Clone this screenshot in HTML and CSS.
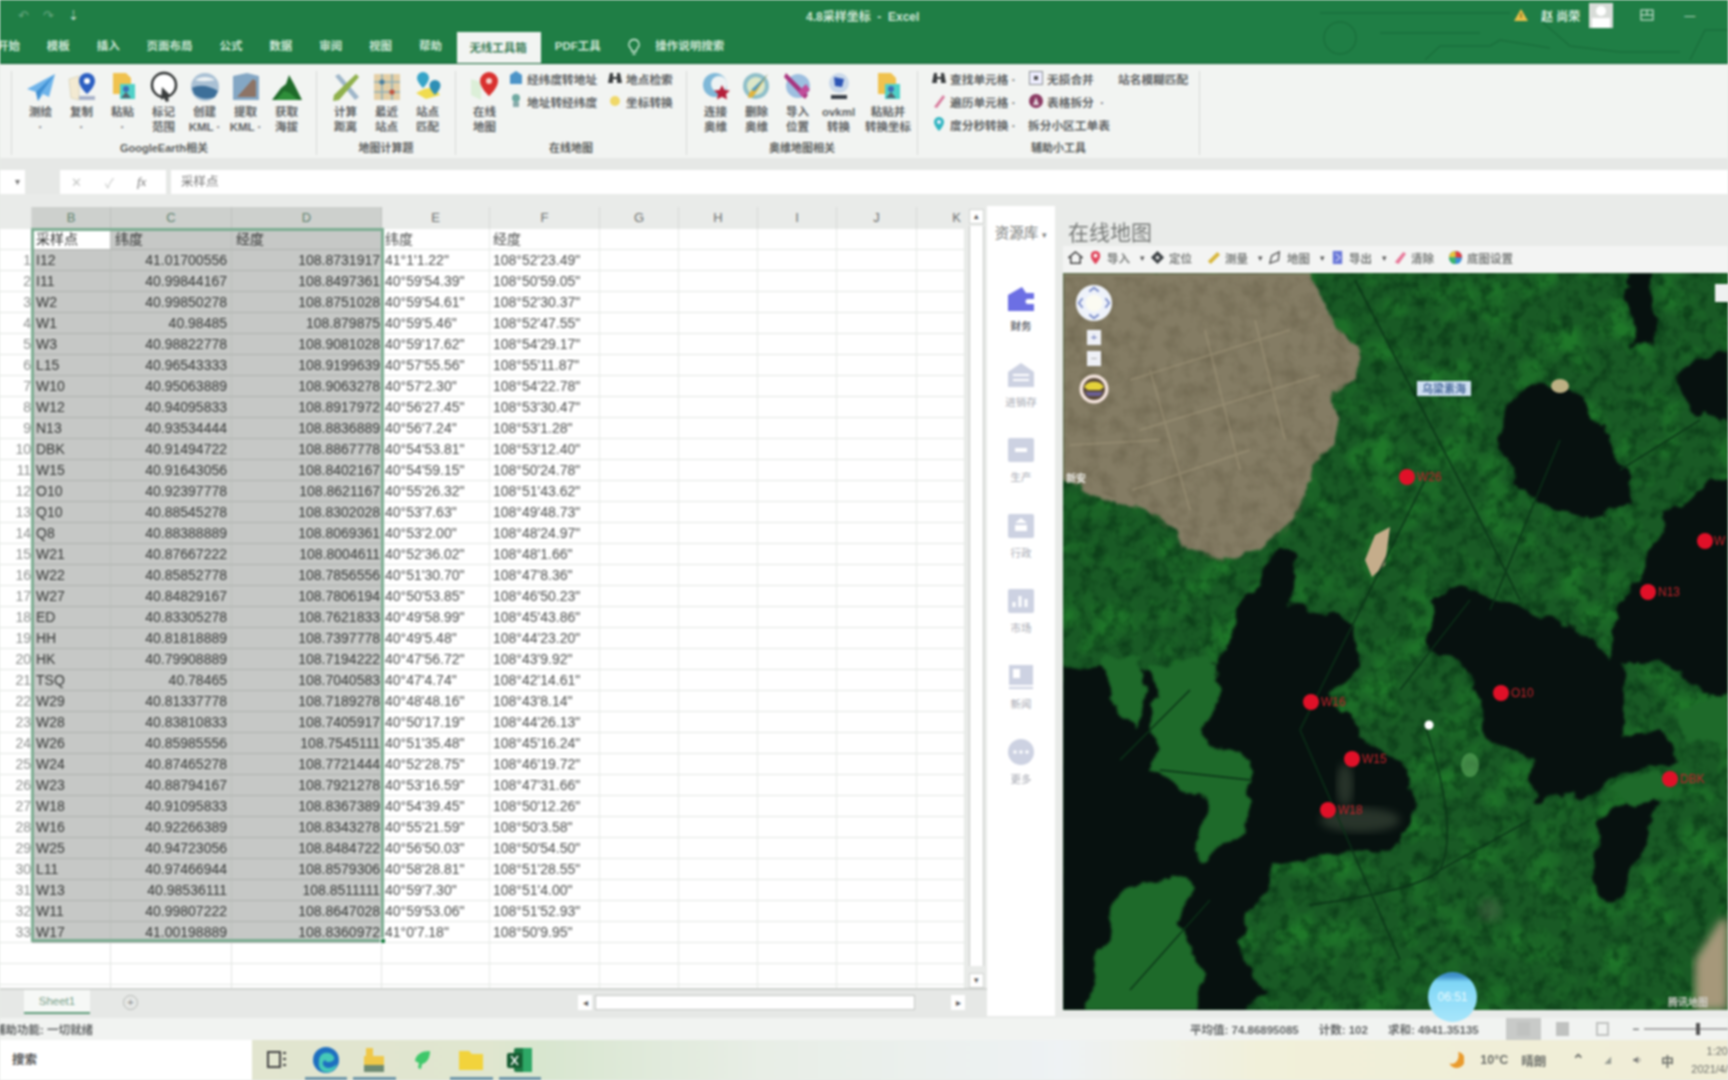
FILE: index.html
```html
<!DOCTYPE html>
<html lang="zh">
<head>
<meta charset="utf-8">
<title>4.8采样坐标 - Excel</title>
<link rel="stylesheet" href="styles.css">
</head>
<body>
<div class="app">
  <header class="titlebar">
    <svg class="circuit" viewBox="0 0 528 64" width="528" height="64"><circle cx="140" cy="38" r="16"/><path d="M180 33h100M225 60l15-14h50l10-6 50 8M340 20l30 26 50 6h60M490 60l15-30h25M120 13h190"/></svg>
    <div class="qat"><span class="qat-undo">↶</span><span class="qat-undo">↷</span><span class="qat-pin">⇣</span></div>
    <div class="doc-title">4.8采样坐标&nbsp; - &nbsp;Excel</div>
    <div class="account">
      <svg class="warn" viewBox="0 0 16 16" width="16" height="16"><path d="M8 2l7 12H1z" fill="#e8c04a"/><path d="M7.5 6h1v5h-1z" fill="#5a4a10"/></svg>
      <span class="user">赵 尚荣</span>
      <div class="avatar"><i></i><b></b></div>
      <svg class="win-ico" viewBox="0 0 14 12" width="14" height="12"><rect x="1" y="1" width="12" height="10" fill="none" stroke="#e6f2ea"/><path d="M7 1v5M1 6h12" stroke="#e6f2ea"/></svg>
      <span class="minimize">—</span>
    </div>
  </header>

  <nav class="tabs">
    <span class="tab">开始</span><span class="tab">模板</span><span class="tab">插入</span><span class="tab">页面布局</span><span class="tab">公式</span><span class="tab">数据</span><span class="tab">审阅</span><span class="tab">视图</span><span class="tab">帮助</span>
    <span class="tab active">无线工具箱</span><span class="tab">PDF工具</span>
    <svg class="bulb" viewBox="0 0 14 18" width="14" height="18"><path d="M7 1.500a5 5 0 0 0-3 9l1 3h4l1-3a5 5 0 0 0-3-9zM5.500 16h3" fill="none" stroke="#d8f0df" stroke-width="1.300"/></svg>
    <span class="tab tell">操作说明搜索</span>
  </nav>

  <section class="ribbon">
    <div class="group g0"></div>
    <div class="group g1">
      <div class="items">
        <div class="big"><svg class="ico" viewBox="0 0 32 32"><path d="M30 3L2 18l9 3 2 9 5-7 6 3z" fill="#6fb4ea"/><path d="M30 3L11 21l2 9 3-8z" fill="#3f8fd2"/></svg><span>测绘<br>·</span></div>
        <div class="big"><svg class="ico" viewBox="0 0 32 32"><path d="M3 8l10-3v24l-8-2z" fill="#f3ead2" stroke="#cfc7a8" stroke-width=".6"/><path d="M21 2a8 8 0 0 1 8 8c0 6-8 13-8 13s-8-7-8-13a8 8 0 0 1 8-8z" fill="#2c5fc2"/><circle cx="21" cy="10" r="3" fill="#fff"/><rect x="13" y="25" width="16" height="4" fill="#a9b3c9"/></svg><span>复制<br>·</span></div>
        <div class="big"><svg class="ico" viewBox="0 0 32 32"><path d="M6 2h13l5 5v16H6z" fill="#f0c24e"/><rect x="13" y="13" width="15" height="15" fill="#4fd1c8"/><circle cx="19" cy="18" r="3" fill="#3f6fb5"/><path d="M14 27l5-6 5 6z" fill="#55606e"/></svg><span>粘贴<br>·</span></div>
        <div class="big"><svg class="ico" viewBox="0 0 32 32"><circle cx="16" cy="14" r="12" fill="#fff" stroke="#2c2f2f" stroke-width="2.400"/><path d="M14 16l9 9-3 1 1 4-3 1-2-4-3 2z" fill="#3a3d3d"/></svg><span>标记<br>范围</span></div>
        <div class="big"><svg class="ico" viewBox="0 0 32 32"><circle cx="16" cy="16" r="14" fill="#a9c0d4"/><path d="M3 17c8-4 18-2 26 3l-3 6c-7 3-16 2-21-3z" fill="#3d6f99"/><path d="M6 9c6-4 14-4 20 0-6 1-13 2-20 0z" fill="#eef2f4"/></svg><span>创建<br>KML ·</span></div>
        <div class="big"><svg class="ico" viewBox="0 0 32 32"><path d="M3 5l14-3 12 3v24H3z" fill="#84a7c4"/><path d="M7 26l16-18 3 2v16z" fill="#8d7466"/></svg><span>提取<br>KML ·</span></div>
        <div class="big"><svg class="ico" viewBox="0 0 32 32"><path d="M1 29l9-12 5-4 3-9 5 9 8 16z" fill="#1f6b2a"/><path d="M5 29l8-9 6 2 8 7z" fill="#2f8f3a"/></svg><span>获取<br>海拔</span></div>
      </div>
      <div class="gtitle">GoogleEarth相关</div>
    </div>
    <div class="group g2">
      <div class="items">
        <div class="big"><svg class="ico" viewBox="0 0 32 32"><path d="M5 5l4-2 20 23-4 3z" fill="#9fb6c9"/><path d="M26 3l3 3L9 29l-6 1 1-6z" fill="#8fb04c"/></svg><span>计算<br>距离</span></div>
        <div class="big"><svg class="ico" viewBox="0 0 32 32"><rect x="3" y="3" width="26" height="26" fill="#e4cfa6"/><path d="M3 11h26M3 21h26M11 3v26M21 3v26" stroke="#8fb0b8" stroke-width="1.600"/><circle cx="11" cy="11" r="2.600" fill="#4a7f9e"/><circle cx="21" cy="21" r="2.600" fill="#c0533f"/></svg><span>最近<br>站点</span></div>
        <div class="big"><svg class="ico" viewBox="0 0 32 32"><path d="M4 22l10 6 14-4-6-8-10 2z" fill="#f0dc4e"/><path d="M11 1a6 6 0 0 1 6 6c0 4-6 10-6 10S5 11 5 7a6 6 0 0 1 6-6z" fill="#35a4c8"/><path d="M23 9a5.500 5.500 0 0 1 5.500 5.500c0 4-5.500 9.500-5.500 9.500s-5.500-5.500-5.500-9.500A5.500 5.500 0 0 1 23 9z" fill="#2f8fb5"/></svg><span>站点<br>匹配</span></div>
      </div>
      <div class="gtitle">地图计算题</div>
    </div>
    <div class="group g3">
      <div class="items">
        <div class="big"><svg class="ico" viewBox="0 0 32 32"><path d="M2 8l10 3v18L2 24z" fill="#dcefd8"/><path d="M20 1a9 9 0 0 1 9 9c0 7-9 15-9 15s-9-8-9-15a9 9 0 0 1 9-9z" fill="#d9312f"/><circle cx="20" cy="10" r="3" fill="#f6d0c8"/></svg><span>在线<br>地图</span></div>
        <div class="smallcol c31">
          <div class="sm"><svg class="mini" viewBox="0 0 16 16"><path d="M8 1l6 4v9H2V5z" fill="#4d94c8"/></svg><span>经纬度转地址</span></div>
          <div class="sm"><svg class="mini" viewBox="0 0 16 16"><circle cx="8" cy="5" r="4" fill="#6fa8a0"/><rect x="5" y="9" width="6" height="5" fill="#8aa"/></svg><span>地址转经纬度</span></div>
        </div>
        <div class="smallcol c32">
          <div class="sm"><svg class="mini" viewBox="0 0 16 16"><path d="M1 13l2-10h3v4h4V3h3l2 10h-5V9H6v4z" fill="#3a3d3f"/></svg><span>地点检索</span></div>
          <div class="sm"><svg class="mini" viewBox="0 0 16 16"><circle cx="8" cy="8" r="5" fill="#f0d868"/></svg><span>坐标转换</span></div>
        </div>
      </div>
      <div class="gtitle">在线地图</div>
    </div>
    <div class="group g4">
      <div class="items">
        <div class="big"><svg class="ico" viewBox="0 0 32 32"><circle cx="15" cy="14" r="12" fill="#7fb8d8"/><circle cx="19" cy="13" r="8" fill="#eef3f4"/><path d="M22 14l2.500 5 5.500.5-4 3.500 1 5.500-5-2.800-5 2.800 1-5.500-4-3.500 5.500-.5z" fill="#b5203a"/></svg><span>连接<br>奥维</span></div>
        <div class="big"><svg class="ico" viewBox="0 0 32 32"><circle cx="15" cy="15" r="13" fill="#8fbfc9"/><circle cx="15" cy="15" r="9" fill="#dce7c8"/><path d="M27 3L12 26l-5 1 1-5z" fill="#e0b43c"/><path d="M27 3L14 20l-4-1z" fill="#4f9ac2"/></svg><span>删除<br>奥维</span></div>
        <div class="big"><svg class="ico" viewBox="0 0 32 32"><circle cx="16" cy="15" r="12" fill="#9dbfe0"/><path d="M4 2l22 22-3 4L2 6z" fill="#a8337e"/><path d="M24 13l4 6-8 7-4-5z" fill="#c14d9a"/></svg><span>导入<br>位置</span></div>
        <div class="big"><svg class="ico" viewBox="0 0 32 32"><circle cx="16" cy="12" r="10" fill="#c9d8ea"/><path d="M11 6l10 2-2 8-7-1z" fill="#2d55b5"/><rect x="8" y="24" width="16" height="4" fill="#3a4048"/></svg><span>ovkml<br>转换</span></div>
        <div class="big wide"><svg class="ico" viewBox="0 0 32 32"><path d="M6 2h13l5 5v16H6z" fill="#f0c24e"/><rect x="13" y="13" width="15" height="15" fill="#4fd1c8"/><circle cx="19" cy="18" r="3" fill="#3f6fb5"/><path d="M14 27l5-6 5 6z" fill="#55606e"/></svg><span>粘贴并<br>转换坐标</span></div>
      </div>
      <div class="gtitle">奥维地图相关</div>
    </div>
    <div class="group g5">
      <div class="items">
        <div class="smallcol c51">
          <div class="sm"><svg class="mini" viewBox="0 0 16 16"><path d="M1 13l2-10h3v4h4V3h3l2 10h-5V9H6v4z" fill="#3a3d3f"/></svg><span>查找单元格 ·</span></div>
          <div class="sm"><svg class="mini" viewBox="0 0 16 16"><path d="M3 14L12 2l2 2-8 11z" fill="#d87a9c"/></svg><span>遍历单元格 ·</span></div>
          <div class="sm"><svg class="mini" viewBox="0 0 16 16"><path d="M8 1a5 5 0 0 1 5 5c0 4-5 9-5 9S3 10 3 6a5 5 0 0 1 5-5z" fill="#2fb5c0"/><circle cx="8" cy="6" r="2" fill="#eef"/></svg><span>度分秒转换 ·</span></div>
        </div>
        <div class="smallcol c52">
          <div class="sm"><svg class="mini" viewBox="0 0 16 16"><rect x="1.500" y="1.500" width="13" height="13" fill="#eef" stroke="#8a8f92"/><rect x="6" y="6" width="4" height="4" fill="#555"/></svg><span>无损合并</span></div>
          <div class="sm"><svg class="mini" viewBox="0 0 16 16"><circle cx="8" cy="8" r="7" fill="#8a3a62"/><path d="M5 12l3-8 3 8z" fill="#e3d5dc"/></svg><span>表格拆分 &nbsp;·</span></div>
          <div class="sm plain"><span>拆分小区工单表</span></div>
        </div>
        <div class="smallcol c53">
          <div class="sm plain"><span>站名模糊匹配</span></div>
        </div>
      </div>
      <div class="gtitle">辅助小工具</div>
    </div>
  </section>

  <div class="ribbon-gap"></div>

  <div class="formula">
    <div class="namebox"><span>▾</span></div>
    <div class="fx-ctl"><span>✕</span><span>✓</span><em>fx</em></div>
    <div class="fx-input">采样点</div>
  </div>

  <main class="workspace">
    <section class="sheet">
      <div class="grid-wrap">
        <div class="grid">
          <div class="col-head">
            <span></span><span class="sel">B</span><span class="sel">C</span><span class="sel">D</span><span>E</span><span>F</span><span>G</span><span>H</span><span>I</span><span>J</span><span>K</span>
          </div>
          <div class="rows">
            <div class="row"><i></i><b class="active-cell">采样点</b><b>纬度</b><b>经度</b><u>纬度</u><u>经度</u><s></s><s></s><s></s><s></s><s></s></div>
            <div class="row"><i>1</i><b>I12</b><b class="n">41.01700556</b><b class="n">108.8731917</b><u>41°1'1.22"</u><u>108°52'23.49"</u><s></s><s></s><s></s><s></s><s></s></div>
            <div class="row"><i>2</i><b>I11</b><b class="n">40.99844167</b><b class="n">108.8497361</b><u>40°59'54.39"</u><u>108°50'59.05"</u><s></s><s></s><s></s><s></s><s></s></div>
            <div class="row"><i>3</i><b>W2</b><b class="n">40.99850278</b><b class="n">108.8751028</b><u>40°59'54.61"</u><u>108°52'30.37"</u><s></s><s></s><s></s><s></s><s></s></div>
            <div class="row"><i>4</i><b>W1</b><b class="n">40.98485</b><b class="n">108.879875</b><u>40°59'5.46"</u><u>108°52'47.55"</u><s></s><s></s><s></s><s></s><s></s></div>
            <div class="row"><i>5</i><b>W3</b><b class="n">40.98822778</b><b class="n">108.9081028</b><u>40°59'17.62"</u><u>108°54'29.17"</u><s></s><s></s><s></s><s></s><s></s></div>
            <div class="row"><i>6</i><b>L15</b><b class="n">40.96543333</b><b class="n">108.9199639</b><u>40°57'55.56"</u><u>108°55'11.87"</u><s></s><s></s><s></s><s></s><s></s></div>
            <div class="row"><i>7</i><b>W10</b><b class="n">40.95063889</b><b class="n">108.9063278</b><u>40°57'2.30"</u><u>108°54'22.78"</u><s></s><s></s><s></s><s></s><s></s></div>
            <div class="row"><i>8</i><b>W12</b><b class="n">40.94095833</b><b class="n">108.8917972</b><u>40°56'27.45"</u><u>108°53'30.47"</u><s></s><s></s><s></s><s></s><s></s></div>
            <div class="row"><i>9</i><b>N13</b><b class="n">40.93534444</b><b class="n">108.8836889</b><u>40°56'7.24"</u><u>108°53'1.28"</u><s></s><s></s><s></s><s></s><s></s></div>
            <div class="row"><i>10</i><b>DBK</b><b class="n">40.91494722</b><b class="n">108.8867778</b><u>40°54'53.81"</u><u>108°53'12.40"</u><s></s><s></s><s></s><s></s><s></s></div>
            <div class="row"><i>11</i><b>W15</b><b class="n">40.91643056</b><b class="n">108.8402167</b><u>40°54'59.15"</u><u>108°50'24.78"</u><s></s><s></s><s></s><s></s><s></s></div>
            <div class="row"><i>12</i><b>O10</b><b class="n">40.92397778</b><b class="n">108.8621167</b><u>40°55'26.32"</u><u>108°51'43.62"</u><s></s><s></s><s></s><s></s><s></s></div>
            <div class="row"><i>13</i><b>Q10</b><b class="n">40.88545278</b><b class="n">108.8302028</b><u>40°53'7.63"</u><u>108°49'48.73"</u><s></s><s></s><s></s><s></s><s></s></div>
            <div class="row"><i>14</i><b>Q8</b><b class="n">40.88388889</b><b class="n">108.8069361</b><u>40°53'2.00"</u><u>108°48'24.97"</u><s></s><s></s><s></s><s></s><s></s></div>
            <div class="row"><i>15</i><b>W21</b><b class="n">40.87667222</b><b class="n">108.8004611</b><u>40°52'36.02"</u><u>108°48'1.66"</u><s></s><s></s><s></s><s></s><s></s></div>
            <div class="row"><i>16</i><b>W22</b><b class="n">40.85852778</b><b class="n">108.7856556</b><u>40°51'30.70"</u><u>108°47'8.36"</u><s></s><s></s><s></s><s></s><s></s></div>
            <div class="row"><i>17</i><b>W27</b><b class="n">40.84829167</b><b class="n">108.7806194</b><u>40°50'53.85"</u><u>108°46'50.23"</u><s></s><s></s><s></s><s></s><s></s></div>
            <div class="row"><i>18</i><b>ED</b><b class="n">40.83305278</b><b class="n">108.7621833</b><u>40°49'58.99"</u><u>108°45'43.86"</u><s></s><s></s><s></s><s></s><s></s></div>
            <div class="row"><i>19</i><b>HH</b><b class="n">40.81818889</b><b class="n">108.7397778</b><u>40°49'5.48"</u><u>108°44'23.20"</u><s></s><s></s><s></s><s></s><s></s></div>
            <div class="row"><i>20</i><b>HK</b><b class="n">40.79908889</b><b class="n">108.7194222</b><u>40°47'56.72"</u><u>108°43'9.92"</u><s></s><s></s><s></s><s></s><s></s></div>
            <div class="row"><i>21</i><b>TSQ</b><b class="n">40.78465</b><b class="n">108.7040583</b><u>40°47'4.74"</u><u>108°42'14.61"</u><s></s><s></s><s></s><s></s><s></s></div>
            <div class="row"><i>22</i><b>W29</b><b class="n">40.81337778</b><b class="n">108.7189278</b><u>40°48'48.16"</u><u>108°43'8.14"</u><s></s><s></s><s></s><s></s><s></s></div>
            <div class="row"><i>23</i><b>W28</b><b class="n">40.83810833</b><b class="n">108.7405917</b><u>40°50'17.19"</u><u>108°44'26.13"</u><s></s><s></s><s></s><s></s><s></s></div>
            <div class="row"><i>24</i><b>W26</b><b class="n">40.85985556</b><b class="n">108.7545111</b><u>40°51'35.48"</u><u>108°45'16.24"</u><s></s><s></s><s></s><s></s><s></s></div>
            <div class="row"><i>25</i><b>W24</b><b class="n">40.87465278</b><b class="n">108.7721444</b><u>40°52'28.75"</u><u>108°46'19.72"</u><s></s><s></s><s></s><s></s><s></s></div>
            <div class="row"><i>26</i><b>W23</b><b class="n">40.88794167</b><b class="n">108.7921278</b><u>40°53'16.59"</u><u>108°47'31.66"</u><s></s><s></s><s></s><s></s><s></s></div>
            <div class="row"><i>27</i><b>W18</b><b class="n">40.91095833</b><b class="n">108.8367389</b><u>40°54'39.45"</u><u>108°50'12.26"</u><s></s><s></s><s></s><s></s><s></s></div>
            <div class="row"><i>28</i><b>W16</b><b class="n">40.92266389</b><b class="n">108.8343278</b><u>40°55'21.59"</u><u>108°50'3.58"</u><s></s><s></s><s></s><s></s><s></s></div>
            <div class="row"><i>29</i><b>W25</b><b class="n">40.94723056</b><b class="n">108.8484722</b><u>40°56'50.03"</u><u>108°50'54.50"</u><s></s><s></s><s></s><s></s><s></s></div>
            <div class="row"><i>30</i><b>L11</b><b class="n">40.97466944</b><b class="n">108.8579306</b><u>40°58'28.81"</u><u>108°51'28.55"</u><s></s><s></s><s></s><s></s><s></s></div>
            <div class="row"><i>31</i><b>W13</b><b class="n">40.98536111</b><b class="n">108.8511111</b><u>40°59'7.30"</u><u>108°51'4.00"</u><s></s><s></s><s></s><s></s><s></s></div>
            <div class="row"><i>32</i><b>W11</b><b class="n">40.99807222</b><b class="n">108.8647028</b><u>40°59'53.06"</u><u>108°51'52.93"</u><s></s><s></s><s></s><s></s><s></s></div>
            <div class="row"><i>33</i><b>W17</b><b class="n">41.00198889</b><b class="n">108.8360972</b><u>41°0'7.18"</u><u>108°50'9.95"</u><s></s><s></s><s></s><s></s><s></s></div>
            <div class="row blank"><i></i><em></em><em></em><em></em><s></s><s></s><s></s><s></s><s></s><s></s><s></s></div>
            <div class="row blank"><i></i><em></em><em></em><em></em><s></s><s></s><s></s><s></s><s></s><s></s><s></s></div>
            <div class="row blank"><i></i><em></em><em></em><em></em><s></s><s></s><s></s><s></s><s></s><s></s><s></s></div>
            <div class="selection"><span class="handle"></span></div>
          </div>
        </div>
        <div class="vscroll"><span class="arrow">▴</span><div class="track"></div><span class="arrow">▾</span></div>
      </div>
      <div class="sheet-tabs">
        <div class="sheet-tab">Sheet1</div>
        <span class="add-sheet">+</span>
        <div class="hscroll"><span class="arrow">◂</span><div class="htrack"></div><span class="arrow">▸</span></div>
      </div>
    </section>

    <aside class="sidebar">
      <div class="side-head">资源库 <small>▾</small></div>
      <div class="side-item current"><svg viewBox="0 0 30 28" width="30" height="28"><path d="M2 10l14-8 4 6h8v6h-6a2 2 0 0 0 0 5h6v7H2z" fill="#6c6fe4"/></svg><span>财务</span></div>
      <div class="side-item"><svg viewBox="0 0 30 28" width="30" height="28"><path d="M2 11L15 2l13 9v15H2z" fill="#cdd2e2"/><path d="M7 14h16M7 19h16" stroke="#fff" stroke-width="2"/></svg><span>进销存</span></div>
      <div class="side-item"><svg viewBox="0 0 30 28" width="30" height="28"><rect x="2" y="2" width="26" height="24" rx="2" fill="#cdd2e2"/><path d="M9 14h12" stroke="#fff" stroke-width="4"/></svg><span>生产</span></div>
      <div class="side-item"><svg viewBox="0 0 30 28" width="30" height="28"><rect x="2" y="2" width="26" height="24" rx="2" fill="#cdd2e2"/><path d="M15 6l6 5H9zM9 13h12v6H9z" fill="#fff"/></svg><span>行政</span></div>
      <div class="side-item"><svg viewBox="0 0 30 28" width="30" height="28"><rect x="2" y="2" width="26" height="24" rx="2" fill="#cdd2e2"/><path d="M8 20v-5M14 20V9M20 20v-8" stroke="#fff" stroke-width="3"/></svg><span>市场</span></div>
      <div class="side-item"><svg viewBox="0 0 30 28" width="30" height="28"><path d="M3 2h24v20H3z" fill="#cdd2e2"/><rect x="7" y="6" width="7" height="9" fill="#fff"/><path d="M3 25h24" stroke="#cdd2e2" stroke-width="2"/></svg><span>新闻</span></div>
      <div class="side-item"><svg viewBox="0 0 30 28" width="30" height="28"><circle cx="15" cy="14" r="13" fill="#cdd2e2"/><circle cx="9" cy="14" r="1.800" fill="#fff"/><circle cx="15" cy="14" r="1.800" fill="#fff"/><circle cx="21" cy="14" r="1.800" fill="#fff"/></svg><span>更多</span></div>
    </aside>

    <section class="map-panel">
      <h1 class="map-title">在线地图</h1>
      <div class="map-tools">
        <svg class="tool-ico" viewBox="0 0 16 16"><path d="M8 2L1 8h2v6h10V8h2z" fill="none" stroke="#444" stroke-width="1.600"/></svg>
        <svg class="tool-ico" viewBox="0 0 16 16"><path d="M8 1a5 5 0 0 1 5 5c0 4-5 9-5 9S3 10 3 6a5 5 0 0 1 5-5z" fill="#e0445a"/><circle cx="8" cy="6" r="2" fill="#fff"/></svg>
        <span class="tool-text">导入</span><span class="caret">▾</span>
        <svg class="tool-ico" viewBox="0 0 16 16"><path d="M8 1l7 7-7 7-7-7z" fill="#3a3f42"/><circle cx="8" cy="8" r="2" fill="#ddd"/></svg>
        <span class="tool-text">定位</span>
        <svg class="tool-ico gap" viewBox="0 0 16 16"><path d="M2 12L12 2l3 3L5 15z" fill="#d8b73c"/></svg>
        <span class="tool-text">测量</span><span class="caret">▾</span>
        <svg class="tool-ico" viewBox="0 0 16 16"><path d="M2 14l2-8 8-4-1 9z" fill="none" stroke="#555" stroke-width="1.500"/></svg>
        <span class="tool-text">地图</span><span class="caret">▾</span>
        <svg class="tool-ico" viewBox="0 0 16 16"><rect x="3" y="1" width="10" height="14" fill="#6a78d8"/><path d="M6 4l5 4-5 4" stroke="#fff" fill="none"/></svg>
        <span class="tool-text">导出</span><span class="caret">▾</span>
        <svg class="tool-ico" viewBox="0 0 16 16"><path d="M3 13L12 2l3 2-8 11z" fill="#e8799a"/></svg>
        <span class="tool-text">清除</span>
        <svg class="tool-ico gap" viewBox="0 0 16 16"><circle cx="8" cy="8" r="7" fill="#3a8fd8"/><path d="M8 8V1a7 7 0 0 1 7 7z" fill="#e23b3b"/><path d="M8 8H1a7 7 0 0 1 7-7z" fill="#e8c53a"/><path d="M8 8v7a7 7 0 0 1-7-7z" fill="#3bb56a"/></svg>
        <span class="tool-text">底图设置</span>
      </div>
      <div class="map">
        <svg class="map-svg" viewBox="1063 273 665 737" width="665" height="737">
          <defs>
            <filter id="rough" filterUnits="userSpaceOnUse" x="1063" y="273" width="665" height="737" color-interpolation-filters="sRGB"><feTurbulence type="fractalNoise" baseFrequency=".035" numOctaves="4" seed="5" result="n"/><feDisplacementMap in="SourceGraphic" in2="n" scale="22" xChannelSelector="R" yChannelSelector="G"/><feGaussianBlur stdDeviation="1.200"/></filter>
            <filter id="veg" filterUnits="userSpaceOnUse" x="1063" y="273" width="665" height="737" color-interpolation-filters="sRGB"><feTurbulence type="fractalNoise" baseFrequency=".075" numOctaves="4" seed="9"/><feColorMatrix values="0 0 0 0 .03  0 0 0 0 .2  0 0 0 0 .08  2.600 0 0 0 -1.150"/></filter>
            <filter id="bright" filterUnits="userSpaceOnUse" x="1063" y="273" width="665" height="737" color-interpolation-filters="sRGB"><feTurbulence type="fractalNoise" baseFrequency=".025" numOctaves="3" seed="21"/><feColorMatrix values="0 0 0 0 .13  0 0 0 0 .5  0 0 0 0 .17  3 0 0 0 -1.400"/></filter>
            <filter id="soil" filterUnits="userSpaceOnUse" x="1063" y="273" width="665" height="737" color-interpolation-filters="sRGB"><feTurbulence type="fractalNoise" baseFrequency=".06" numOctaves="3" seed="3"/><feColorMatrix values="0 0 0 0 .4  0 0 0 0 .37  0 0 0 0 .28  2 0 0 0 -.85"/></filter>
            <filter id="soft"><feGaussianBlur stdDeviation="4"/></filter>
            <clipPath id="tan-clip"><path d="M1064 277H1311L1320 303 1358 350 1354 380 1333 397 1333 443 1311 470 1303 510 1286 533 1222 563 1188 550 1145 510 1086 487 1064 477Z"/></clipPath>
          </defs>
          <rect class="m-green" x="1063" y="273" width="665" height="737"/>
          <rect x="1063" y="273" width="665" height="737" filter="url(#bright)" opacity=".8"/>
          <rect x="1063" y="273" width="665" height="737" filter="url(#veg)" opacity=".7"/>
          <g class="m-water" filter="url(#rough)">
            <path d="M1056 664L1130 672 1215 668 1248 597 1281 547 1299 553 1290 603 1354 623 1358 670 1333 693 1358 737 1405 767 1414 817 1401 847 1333 853 1273 867 1239 937 1260 993 1240 1020H1050Z"/>
            <path d="M1507 403L1541 383 1580 393 1601 427 1614 457 1639 503 1597 517 1554 510 1512 483 1503 437Z"/>
            <path d="M1627 268L1652 268 1654 345 1632 350Z"/>
            <path d="M1678 372L1735 338V420L1690 412Z"/>
            <path d="M1430 603L1465 583 1499 603 1550 617 1592 637 1612 660 1620 603 1650 555 1668 510 1735 470V700L1700 690 1660 660 1622 660 1622 735 1668 735 1680 760 1605 780 1592 793 1537 803 1530 760 1490 740 1478 700 1462 665 1432 650Z"/>
            <path d="M1597 827L1630 800 1660 800 1642 860 1612 905 1590 880Z"/>
          </g>
          <g class="m-green-2" filter="url(#rough)">
            <path d="M1098 660L1141 655 1145 703 1137 733 1115 710Z"/>
            <path d="M1149 667L1209 655 1218 680 1205 737 1239 757 1256 777 1243 827 1205 863 1192 850 1209 803 1188 790 1149 770 1158 727Z"/>
            <path d="M1111 903L1145 880 1188 877 1196 887 1175 927 1209 973 1188 1020 1080 1020 1107 943Z"/>
            <path d="M1668 715L1728 690 1735 740 1690 745Z"/>
            <path d="M1600 790L1660 770 1670 790 1640 810Z"/>
          </g>
          <g class="m-tan" filter="url(#rough)">
            <path d="M1056 268H1311L1320 303 1358 350 1354 380 1333 397 1333 443 1311 470 1303 510 1286 533 1222 563 1188 550 1145 510 1086 487 1056 477Z"/>
          </g>
          <rect x="1063" y="273" width="300" height="300" clip-path="url(#tan-clip)" filter="url(#soil)" opacity=".6"/>
          <g class="m-fields">
            <path d="M1130 380L1290 330M1140 430L1320 375M1132 490L1250 450M1205 330L1240 470M1150 370L1190 510M1255 320L1285 440M1070 445L1160 440"/>
          </g>
          <g class="m-bare">
            <path class="m-sand" d="M1375 535L1390 527 1385 565 1372 577 1365 560Z"/>
            <ellipse class="m-sand2" cx="1560" cy="386" rx="9" ry="7"/>
            <ellipse class="m-grey" cx="1490" cy="910" rx="11" ry="12"/>
            <ellipse class="m-grey" cx="1360" cy="820" rx="40" ry="12"/>
            <ellipse class="m-grey" cx="1345" cy="785" rx="8" ry="22"/>
            <ellipse class="m-pale" cx="1470" cy="765" rx="9" ry="12"/>
            <path class="m-sand-edge" d="M1695 1010V960L1720 920 1728 918V1010Z"/>
          </g>
          <g class="m-road">
            <path d="M1355 280L1480 520 1520 600M1430 470L1300 730M1560 440L1490 610M1190 690L1120 760M1160 770L1250 780M1425 725Q1460 830 1440 870 1420 890 1310 905M1440 870L1530 820M1700 420L1620 470M1300 730L1400 960M1470 600L1400 690M1130 990L1210 900"/>
          </g>
          <g class="m-pins">
            <circle cx="1407" cy="477" r="8"/><text x="1417" y="481">W26</text>
            <circle cx="1705" cy="541" r="8"/><text x="1714" y="545">W</text>
            <circle cx="1648" cy="592" r="8"/><text x="1658" y="596">N13</text>
            <circle cx="1501" cy="693" r="8"/><text x="1511" y="697">O10</text>
            <circle cx="1311" cy="702" r="8"/><text x="1321" y="706">W16</text>
            <circle cx="1352" cy="759" r="8"/><text x="1362" y="763">W15</text>
            <circle cx="1328" cy="810" r="8"/><text x="1338" y="814">W18</text>
            <circle cx="1670" cy="779" r="8"/><text x="1680" y="783">DBK</text>
          </g>
          <circle class="m-dot" cx="1429" cy="725" r="4.500"/>
          <rect class="m-label" x="1417" y="381" width="54" height="15"/>
          <text class="m-label-t" x="1444" y="393">乌梁素海</text>
          <text class="m-side-t" x="1066" y="482">新安</text>
          <text class="m-brand" x="1668" y="1006">腾讯地图</text>
          <rect class="m-chip" x="1715" y="284" width="15" height="18"/>
        </svg>
        <div class="map-ctl">
          <svg class="nav" viewBox="0 0 40 40" width="38" height="38"><circle cx="20" cy="20" r="19" fill="#eef2fa"/><circle cx="20" cy="20" r="9" fill="#fbfbf2"/><path d="M15 8l5-4 5 4M15 32l5 4 5-4M8 15l-4 5 4 5M32 15l4 5-4 5" fill="none" stroke="#7a8cc8" stroke-width="2"/></svg>
          <span class="zoom-btn">+</span>
          <span class="zoom-btn">−</span>
          <svg class="layer" viewBox="0 0 30 30" width="30" height="30"><circle cx="15" cy="15" r="14.500" fill="#f3e3dc"/><circle cx="15" cy="15" r="11" fill="#5a4a3a"/><path d="M5 13a11 9 0 0 1 20 0l-4 3H9z" fill="#e4d23a"/><path d="M6 18h18l-3 4H9z" fill="#6a5f96"/></svg>
        </div>
      </div>
    </section>

    <div class="timer">06:51</div>
  </main>

  <footer class="status">
    <div class="status-left">辅助功能: 一切就绪</div>
    <div class="status-right">
      <span>平均值: 74.86895085</span><span>计数: 102</span><span class="sum">求和: 4941.35135</span>
      <div class="views"><span class="v-on"><i></i></span><span><i></i></span><span><i class="v-o"></i></span></div>
      <div class="zoomer"><span>−</span><div class="slider"><b></b></div></div>
    </div>
  </footer>

  <footer class="taskbar">
    <div class="tb-search"><span>搜索</span></div>
    <div class="apps">
      <div class="app-slot"><svg viewBox="0 0 22 22" width="22" height="22"><rect x="2" y="3" width="12" height="15" fill="none" stroke="#444" stroke-width="2"/><path d="M17 4h3M17 10h3M17 16h3" stroke="#444" stroke-width="2"/></svg></div>
      <div class="app-slot on"><svg viewBox="0 0 30 30" width="30" height="30"><circle cx="15" cy="15" r="13" fill="#1e6fc0"/><path d="M8 17a8 8 0 0 1 15-5c1 3-2 5-6 5-2 0-3-1-2-2-3 0-5 4-1 7 3 2 8 1 12-3-1 6-7 9-12 8-4-1-7-5-6-10z" fill="#45c9b8"/></svg></div>
      <div class="app-slot on"><svg viewBox="0 0 26 28" width="26" height="28"><path d="M5 2h7v8H5z" fill="#efc848"/><path d="M3 10h20v9H3z" fill="#efc848"/><path d="M3 19h20v7H3z" fill="#6d8a72"/></svg></div>
      <div class="app-slot"><svg viewBox="0 0 24 24" width="24" height="24"><path d="M4 13C5 6 11 3 19 3c0 7-3 12-8 13l-1 5-3-1 1-5z" fill="#3ec86a"/></svg></div>
      <div class="app-slot on"><svg viewBox="0 0 28 24" width="28" height="24"><path d="M2 3h10l3 3h11v16H2z" fill="#f2d33c"/></svg></div>
      <div class="app-slot on"><svg viewBox="0 0 30 30" width="30" height="30"><rect x="9" y="3" width="18" height="24" rx="2" fill="#1d7a44"/><rect x="18" y="3" width="9" height="24" fill="#2ea866"/><rect x="2" y="8" width="15" height="15" rx="2" fill="#145a30"/><path d="M6 11l7 9M13 11l-7 9" stroke="#fff" stroke-width="1.500"/></svg></div>
    </div>
    <div class="tray">
      <svg viewBox="0 0 24 26" width="24" height="26"><path d="M15 1a12 12 0 1 1-13 17c8 3 16-5 13-17z" fill="#e99a2c"/></svg>
      <span class="temp">10°C</span><span class="wx">晴朗</span>
      <span class="tray-i">⌃</span>
      <svg viewBox="0 0 16 16" width="16" height="16"><path d="M2 14L12 3v11z" fill="#9a9f96"/></svg>
      <svg viewBox="0 0 16 16" width="16" height="16"><path d="M2 6h3l4-3v10L5 10H2z" fill="#777"/><path d="M11 5q2 3 0 6" fill="none" stroke="#777"/></svg>
      <span class="ime">中</span>
      <div class="clock"><span>1:20</span><span>2021/4/</span></div>
    </div>
  </footer>
</div>
</body>
</html>
```

FILE: styles.css
```css
* { box-sizing: border-box; }
html, body { margin: 0; padding: 0; background: #e8eae8; }
body { width: 1728px; height: 1080px; overflow: hidden; font-family: "Liberation Sans", "Noto Sans CJK SC", sans-serif; color: #3c3f3e; }
.app { width: 1728px; height: 1080px; display: flex; flex-direction: column; overflow: hidden; filter: blur(1px); position: relative; }

/* title */
.titlebar { height: 30px; background: #1f7e45; flex: none; display: flex; align-items: center; position: relative; color: #e6f2ea; }
.circuit { position: absolute; left: 1200px; top: 0; fill: none; stroke: #1a6f3c; stroke-width: 1.500; }
.qat { width: 760px; padding-left: 18px; display: flex; gap: 14px; font-size: 13px; flex: none; }
.qat-undo { opacity: .35; }
.qat-pin { opacity: .85; }
.doc-title { width: 170px; flex: none; margin-left: 46px; font-size: 12px; white-space: nowrap; font-weight: 700; color: #cfe6d6; }
.account { position: relative; margin-left: auto; display: flex; align-items: center; width: 220px; flex: none; padding-left: 5px; }
.warn { flex: none; }
.user { font-size: 12px; font-weight: 700; margin-left: 12px; white-space: nowrap; color: #d8ebde; }
.avatar { width: 24px; height: 25px; background: #d8dcd8; margin-left: 9px; position: relative; overflow: hidden; flex: none; }
.avatar i { position: absolute; left: 7px; top: 3px; width: 10px; height: 10px; border-radius: 50%; background: #fff; }
.avatar b { position: absolute; left: 3px; top: 15px; width: 18px; height: 12px; background: #fff; }
.win-ico { margin-left: 27px; flex: none; }
.minimize { margin-left: 30px; font-size: 11px; color: #cfe6d6; }

/* tabs */
.tabs { height: 34px; background: #1f7e45; border-bottom: 1px solid #166036; flex: none; display: flex; align-items: center; overflow: hidden; }
.tab { flex: none; padding: 0 13.450px; font-size: 11.500px; line-height: 33px; height: 33px; color: #cfe6d6; font-weight: 700; white-space: nowrap; }
.tab:first-child { margin-left: -16.500px; }
.tab.active { background: #f2f4f2; color: #3f7f5a; width: 84px; padding: 0 12px; height: 32px; margin-left: 2px; margin-top: 2px; }
.bulb { margin-left: 13px; flex: none; }
.tab.tell { padding-left: 14px; }

/* ribbon */
.ribbon { height: 94px; background: #f2f4f2; flex: none; display: flex; padding-top: 6px; overflow: hidden; border-top: 1px solid #e3f0e6; }
.group { flex: none; display: flex; flex-direction: column; height: 84px; border-right: 1px solid #d6d9d6; }
.items { display: flex; height: 70px; flex: none; }
.gtitle { text-align: center; font-size: 11px; line-height: 14px; color: #5c5f5e; font-weight: 700; white-space: nowrap; margin-left: -8px; }
.g0 { width: 12px; }
.g1 { width: 305px; padding-left: 8px; }
.g2 { width: 139px; padding-left: 8px; }
.g3 { width: 231px; padding-left: 8px; }
.g4 { width: 231px; padding-left: 8px; }
.g5 { width: 282px; padding-left: 13px; }
.g5 .gtitle { margin-left: -13px; }
.big { width: 41px; flex: none; display: flex; flex-direction: column; align-items: center; }
.big.wide { width: 58px; }
.big span { font-size: 11.500px; line-height: 15px; text-align: center; margin-top: 2px; white-space: nowrap; font-weight: 700; color: #606365; }
.ico { width: 32px; height: 32px; display: block; flex: none; }
.smallcol { display: flex; flex-direction: column; gap: 5px; margin-top: -2px; flex: none; }
.sm { display: flex; align-items: center; height: 18px; white-space: nowrap; }
.sm span { font-size: 11.700px; font-weight: 700; color: #606365; }
.mini { width: 16px; height: 16px; flex: none; margin-right: 3px; }
.c31 { margin-left: 3px; width: 99px; }
.c32 { width: 64px; }
.c51 { width: 97px; }
.c52 { width: 90px; }

.ribbon-gap { height: 12px; flex: none; background: #e6e8e6; }

/* formula bar */
.formula { height: 24px; flex: none; background: #e6e8e6; display: flex; }
.namebox { width: 25px; background: #fff; text-align: right; font-size: 10px; line-height: 24px; padding-right: 5px; color: #777; flex: none; }
.fx-ctl { margin-left: 35px; width: 106px; background: #fff; display: flex; align-items: center; gap: 23px; padding-left: 11px; color: #c4c6c4; font-size: 13px; flex: none; }
.fx-ctl em { color: #777; font-family: "Liberation Serif", serif; }
.fx-input { margin-left: 5px; flex: 1; background: #fff; font-size: 12.500px; line-height: 24px; padding-left: 10px; color: #777; }

/* workspace */
.workspace { flex: none; height: 824px; display: flex; background: #e9ebe9; position: relative; }
.sheet { width: 987px; flex: none; display: flex; flex-direction: column; }
.grid-wrap { height: 794px; display: flex; flex: none; padding-top: 13px; overflow: hidden; }
.grid { width: 965px; flex: none; background: #fff; overflow: hidden; }
.col-head, .row { display: grid; grid-template-columns: 32px 79px 121px 150px 108px 110px 79px 79px 79px 80px 48px; }
.col-head { height: 22px; background: #e9ebe9; }
.col-head span { text-align: center; font-size: 13px; line-height: 21px; color: #6a6d6b; border-right: 1px solid #d6d9d6; }
.col-head span:last-child { text-align: right; padding-right: 4px; border-right: 0; }
.col-head .sel { background: #cdd0cd; color: #5d7f6c; border-right-color: #bdc0bd; }
.rows { position: relative; }
.row { height: 21px; }
.row > * { font-style: normal; text-decoration: none; font-weight: 400; font-size: 14px; line-height: 20px; height: 21px; border-bottom: 1px solid #e3e7e3; border-right: 1px solid #e7ebe7; padding: 0 2px; overflow: hidden; white-space: nowrap; color: #4a4c4b; display: block; }
.row i { text-align: right; padding-right: 1px; color: #8d908e; border-right: 0; }
.row b { background: #c6c8c6; border-bottom-color: #afb2af; border-right-color: #bcbfbc; color: #343635; padding-left: 4px; }
.row b.active-cell { background: #fff; }
.row b.n { text-align: right; padding-right: 1px; }
.row b.n:nth-child(3) { padding-right: 4px; }
.row u { padding-left: 3px; }
.row em { border-right-color: #e2e5e2; }
.selection { position: absolute; left: 31px; top: -1px; width: 353px; height: 714px; border: 3px solid #7cad92; pointer-events: none; }
.handle { position: absolute; right: -5px; bottom: -5px; width: 6px; height: 6px; background: #1f7e45; border: 1px solid #fff; }
.vscroll { width: 22px; flex: none; background: #e9ebe9; display: flex; flex-direction: column; align-items: center; }
.vscroll .arrow { width: 15px; height: 15px; background: #fff; border: 1px solid #d0d3d0; font-size: 9px; line-height: 13px; text-align: center; color: #555; flex: none; margin-top: 2px; }
.track { flex: 1; width: 15px; background: #fff; margin: 2px 0 5px; border-left: 1px solid #c4c7c4; border-right: 1px solid #c4c7c4; }

.sheet-tabs { flex: none; height: 30px; background: #e6e8e6; border-top: 2px solid #d0d3d0; display: flex; align-items: flex-start; position: relative; }
.sheet-tab { margin-left: 24px; width: 66px; height: 24px; background: #f6f8f6; border-bottom: 2px solid #5d9a78; font-size: 11.500px; line-height: 22px; text-align: center; color: #7aa08a; flex: none; }
.add-sheet { margin-left: 33px; margin-top: 5px; width: 15px; height: 15px; border: 1.500px solid #b4b7b4; border-radius: 50%; font-size: 11px; line-height: 12px; text-align: center; color: #888; flex: none; }
.hscroll { margin-left: 440px; margin-top: 5px; display: flex; height: 15px; flex: none; }
.hscroll .arrow { width: 14px; height: 15px; background: #fff; font-size: 10px; line-height: 15px; text-align: center; color: #555; flex: none; }
.htrack { width: 320px; flex: none; margin: 0 36px 0 3px; background: #fff; border: 1px solid #c4c7c4; }

/* sidebar */
.sidebar { width: 68px; flex: none; background: #fff; margin-top: 12px; height: 810px; display: flex; flex-direction: column; align-items: center; }
.side-head { font-size: 14.500px; margin-top: 13px; height: 38.500px; line-height: 28px; white-space: nowrap; color: #777a78; font-weight: 400; flex: none; }
.side-head small { font-size: 9px; }
.side-item { height: 75.500px; display: flex; flex-direction: column; align-items: center; gap: 6px; padding-top: 27.500px; flex: none; }
.side-item span { font-size: 10.500px; line-height: 14px; color: #a6a9b2; white-space: nowrap; }
.side-item.current span { color: #6a6d74; font-weight: 700; }

/* map */
.map-panel { flex: 1; min-width: 0; padding-left: 8px; display: flex; flex-direction: column; overflow: hidden; }
.map-title { margin: 26px 0 0 5px; font-size: 21px; line-height: 26px; height: 26px; font-weight: 400; color: #767977; flex: none; }
.map-tools { height: 27px; padding-bottom: 4px; display: flex; align-items: center; background: #f3f4f3; flex: none; }
.tool-ico { width: 15px; height: 15px; flex: none; margin-left: 5px; }
.tool-ico.gap { margin-left: 14px; }
.tool-text { font-size: 11.500px; font-weight: 700; margin-left: 4px; color: #7c7f7d; white-space: nowrap; flex: none; }
.caret { font-size: 9px; margin-left: 10px; flex: none; color: #555; }
.map { position: relative; height: 737px; width: 665px; overflow: hidden; flex: none; background: #0a1612; }
.map-svg { display: block; }
.m-green { fill: #195a25; }
.m-green-2 { fill: #1e6a2a; }
.m-water { fill: #07110f; }
.m-tan { fill: #847c64; }
.m-fields { fill: none; stroke: #a39a7c; stroke-width: 2; opacity: .45; }
.m-sand { fill: #c5ad8b; }
.m-sand2 { fill: #bcb083; }
.m-grey { fill: #5b6a55; opacity: .4; filter: url(#soft); }
.m-pale { fill: #5fae5f; opacity: .6; }
.m-sand-edge { fill: #a6987a; filter: url(#soft); }
.m-road { fill: none; stroke: #0b3318; stroke-width: 1.800; opacity: .8; }
.m-pins circle { fill: #e01028; }
.m-pins text { fill: #c8222a; font: 12px "Liberation Sans", sans-serif; }
.m-dot { fill: #fff; }
.m-label { fill: #cfe0f2; }
.m-label-t { fill: #4f6f9e; font: 700 11px "Noto Sans CJK SC", sans-serif; text-anchor: middle; }
.m-side-t { fill: #e6e6e0; font: 700 10px "Noto Sans CJK SC", sans-serif; }
.m-brand { fill: #cfcfc8; font: 700 10px "Noto Sans CJK SC", sans-serif; }
.m-chip { fill: #eef0f0; }
.map-ctl { position: absolute; left: 12px; top: 11px; width: 38px; display: flex; flex-direction: column; align-items: center; gap: 6px; }
.nav { margin-bottom: 2px; }
.zoom-btn { width: 14px; height: 15px; background: #eef0f6; font-size: 11px; line-height: 14px; text-align: center; color: #6a78b8; }
.zoom-btn + .zoom-btn { color: #999; }
.layer { margin-top: 2px; }
.timer { position: absolute; left: 1428px; top: 778px; width: 49px; height: 50px; border-radius: 50%; background: linear-gradient(#3f8fc8 0 8%, #7fd6f6 20%, #a8e6fb 100%); color: #e8fbff; font-size: 12px; line-height: 50px; text-align: center; }

/* status */
.status { height: 22px; flex: none; background: #f1f3f1; display: flex; align-items: center; justify-content: space-between; font-size: 11.500px; color: #66696a; }
.status-left { margin-left: -6px; font-weight: 700; white-space: nowrap; }
.status-right { display: flex; align-items: center; gap: 20px; font-weight: 700; white-space: nowrap; width: 538px; flex: none; }
.status-right .sum { margin-right: 12px; }
.views { display: flex; align-items: center; gap: 20px; margin-left: -5px; flex: none; }
.views span { width: 20px; height: 18px; display: flex; align-items: center; justify-content: center; }
.views .v-on { width: 35px; height: 22px; background: #c8cac8; margin-right: -8px; }
.views i { width: 13px; height: 14px; background: #c0c2c0; display: block; }
.views i.v-o { background: #f1f3f1; border: 2px solid #c0c2c0; }
.zoomer { display: flex; align-items: center; gap: 5px; margin-left: 0; flex: 1; min-width: 0; }
.slider { width: 90px; height: 2px; background: #aaa; position: relative; flex: none; }
.slider b { position: absolute; left: 52px; top: -5px; width: 4px; height: 12px; background: #555; }

/* taskbar */
.taskbar { height: 40px; flex: none; display: flex; align-items: center; background: linear-gradient(90deg, #e2e5cf 252px, #e0e6cf 490px, #d8e6cf 540px, #e8eee6 760px, #eef2f4 1060px, #f1f0da 1260px, #f0edd6 1728px); overflow: hidden; }
.tb-search { width: 252px; height: 40px; background: #fff; flex: none; padding-left: 12px; font-size: 12.500px; line-height: 40px; color: #555; font-weight: 700; }
.apps { display: flex; align-items: center; flex: none; height: 40px; margin-left: 1px; }
.app-slot { height: 40px; width: 48.500px; display: flex; align-items: center; justify-content: center; position: relative; flex: none; }
.app-slot.on::after { content: ""; position: absolute; left: 3px; right: 3px; bottom: 0; height: 3px; background: #6b94a8; }
.tray { margin-left: auto; display: flex; align-items: center; gap: 18px; width: 280px; flex: none; white-space: nowrap; font-size: 12.500px; color: #6c6f6a; font-weight: 700; }
.tray .temp { margin-left: -2px; }
.tray .wx { margin-left: -5px; }
.tray-i { font-size: 15px; margin-left: 8px; }
.ime { font-size: 13px; }
.clock { display: flex; flex-direction: column; font-size: 11px; line-height: 18px; margin-left: -14px; align-items: flex-end; width: 50px; flex: none; font-weight: 400; }
```
